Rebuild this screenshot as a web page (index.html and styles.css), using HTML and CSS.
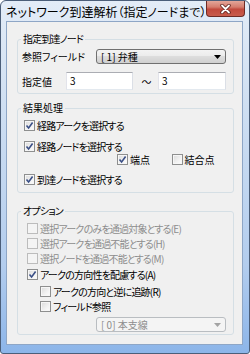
FILE: index.html
```html
<!DOCTYPE html>
<html lang="ja">
<head>
<meta charset="utf-8">
<title>ネットワーク到達解析</title>
<link rel="stylesheet" href="styles.css">
</head>
<body>
<div class="window">
  <div class="titlebar">
    <span class="title">ネットワーク到達解析（指定ノードまで）</span>
    <div class="close">
      <svg width="13" height="10" viewBox="0 0 13 10">
        <path d="M3 1.5 L10 8.5 M10 1.5 L3 8.5" stroke="#5a1f1a" stroke-width="3.4" stroke-linecap="round"/>
        <path d="M3 1.5 L10 8.5 M10 1.5 L3 8.5" stroke="#ffffff" stroke-width="1.8" stroke-linecap="round"/>
      </svg>
    </div>
  </div>
  <div class="client">
    <fieldset class="group g1">
      <legend>指定到達ノード</legend>
      <div class="row-field">
        <span class="lbl lbl-long">参照フィールド</span>
        <div class="combo">
          <span>[ 1] 弁種</span>
          <svg class="arrow" width="7" height="4" viewBox="0 0 7 4"><path d="M0 0 H7 L3.5 4 Z" fill="#000"/></svg>
        </div>
      </div>
      <div class="row-value">
        <span class="lbl lbl-short kanji">指定値</span>
        <div class="textbox">3</div>
        <span class="tilde">～</span>
        <div class="textbox wide">3</div>
      </div>
    </fieldset>

    <fieldset class="group g2">
      <legend class="kanji">結果処理</legend>
      <div class="body body2">
        <div class="cbrow">
          <span class="cb checked"><svg width="9" height="9" viewBox="0 0 9 9"><path d="M1.5 4.5 L3.6 7 L7.6 1.6" fill="none" stroke="#3a4f86" stroke-width="1.6"/></svg></span>
          <span>経路アークを選択する</span>
        </div>
        <div class="cbrow r2">
          <span class="cb checked"><svg width="9" height="9" viewBox="0 0 9 9"><path d="M1.5 4.5 L3.6 7 L7.6 1.6" fill="none" stroke="#3a4f86" stroke-width="1.6"/></svg></span>
          <span>経路ノードを選択する</span>
        </div>
        <div class="cbrow sub">
          <div class="subitem">
            <span class="cb checked"><svg width="9" height="9" viewBox="0 0 9 9"><path d="M1.5 4.5 L3.6 7 L7.6 1.6" fill="none" stroke="#3a4f86" stroke-width="1.6"/></svg></span>
            <span class="kanji">端点</span>
          </div>
          <div class="subitem">
            <span class="cb"></span>
            <span class="kanji">結合点</span>
          </div>
        </div>
        <div class="cbrow r4">
          <span class="cb checked"><svg width="9" height="9" viewBox="0 0 9 9"><path d="M1.5 4.5 L3.6 7 L7.6 1.6" fill="none" stroke="#3a4f86" stroke-width="1.6"/></svg></span>
          <span>到達ノードを選択する</span>
        </div>
      </div>
    </fieldset>

    <fieldset class="group g3">
      <legend>オプション</legend>
      <div class="body body3">
        <div class="cbrow disabled">
          <span class="cb"></span>
          <span>選択アークのみを通過対象とする(E)</span>
        </div>
        <div class="cbrow disabled o2">
          <span class="cb"></span>
          <span>選択アークを通過不能とする(H)</span>
        </div>
        <div class="cbrow disabled o3">
          <span class="cb"></span>
          <span>選択ノードを通過不能とする(M)</span>
        </div>
        <div class="cbrow o4">
          <span class="cb checked"><svg width="9" height="9" viewBox="0 0 9 9"><path d="M1.5 4.5 L3.6 7 L7.6 1.6" fill="none" stroke="#3a4f86" stroke-width="1.6"/></svg></span>
          <span>アークの方向性を配慮する(A)</span>
        </div>
        <div class="cbrow indent o5">
          <span class="cb"></span>
          <span>アークの方向と逆に追跡(R)</span>
        </div>
        <div class="cbrow indent o6">
          <span class="cb"></span>
          <span>フィールド参照</span>
        </div>
        <div class="combo disabled-combo">
          <span>[ 0] 本支線</span>
          <svg class="arrow" width="7" height="4" viewBox="0 0 7 4"><path d="M0 0 H7 L3.5 4 Z" fill="#a3a3a3"/></svg>
        </div>
      </div>
    </fieldset>
  </div>
</div>
</body>
</html>
```

FILE: styles.css
```css
html, body {
  margin: 0;
  padding: 0;
}

body {
  width: 250px;
  height: 354px;
  overflow: hidden;
  background: #ffffff;
  font-family: "Noto Sans CJK JP", "Noto Sans", sans-serif;
  font-size: 10px;
  font-feature-settings: "palt";
  letter-spacing: -0.8px;
  color: #000;
}

.kanji { letter-spacing: 0; }

.window {
  width: 250px;
  height: 354px;
  box-sizing: border-box;
  border: 1px solid #4b5e79;
  border-radius: 6px 6px 3px 3px;
  background: linear-gradient(to bottom, #e3ecf7 0%, #cfdff2 30%, #b3cdee 75%, #8cb5e9 100%);
  display: flex;
  flex-direction: column;
}

.titlebar {
  height: 20px;
  display: flex;
  align-items: center;
  padding: 0 4px 0 5px;
}

.title {
  font-size: 12px;
  line-height: 14px;
  letter-spacing: 0;
  color: #000;
  white-space: nowrap;
  margin-top: 1px;
}

.close {
  margin-left: auto;
  align-self: flex-start;
  width: 39px;
  height: 16px;
  box-sizing: border-box;
  border: 1px solid #6e2b25;
  border-top: none;
  border-radius: 0 0 4px 4px;
  background: linear-gradient(to bottom, #e3a699 0%, #d57d6e 40%, #c24a3d 55%, #c85c4c 100%);
  display: flex;
  align-items: center;
  justify-content: center;
}

.client {
  flex: 1;
  margin: 0 6px 8px 5px;
  background: #f0f0f0;
  border: 1px solid #8ea6c6;
  display: flex;
  flex-direction: column;
}

.group {
  margin: 0 8px 0 10px;
  width: 217px;
  box-sizing: border-box;
  border: 1px solid #d5dfe5;
  border-radius: 3px;
  padding: 4px 7px 3px 4px;
  min-width: 0;
}

.group legend {
  padding: 0 2px;
  margin-left: -1px;
  line-height: 12px;
  font-size: 10px;
}

.g1 { margin-top: 11px; }
.g2 { margin-top: 8px; padding-top: 5px; padding-bottom: 6px; }
.g3 { margin-top: 12px; padding-top: 5px; padding-bottom: 2px; }

.row-field {
  display: flex;
  align-items: center;
  height: 15px;
}

.lbl-long { width: 74px; flex: none; letter-spacing: 0; }
.lbl-short { width: 44px; flex: none; }

.row-value {
  display: flex;
  align-items: center;
  height: 18px;
  margin-top: 8px;
}

.combo {
  width: 130px;
  height: 15px;
  box-sizing: border-box;
  border: 1px solid #707070;
  border-radius: 3px;
  background: linear-gradient(to bottom, #f3f3f3 0%, #ebebeb 50%, #dddddd 50%, #d0d0d0 100%);
  display: flex;
  align-items: center;
  justify-content: space-between;
  padding: 0 4px 0 4px;
  line-height: 13px;
  letter-spacing: 0;
  flex: none;
}

.arrow { flex: none; }

.textbox {
  width: 67px;
  height: 18px;
  box-sizing: border-box;
  border: 1px solid #abadb3;
  border-bottom-color: #e3e9ef;
  border-left-color: #e2e3ea;
  border-right-color: #dbdfe6;
  background: #ffffff;
  padding-left: 3px;
  line-height: 16px;
  flex: none;
}

.textbox.wide { width: 68px; }

.tilde {
  width: 24px;
  text-align: center;
  flex: none;
  margin-left: 1px;
}

.body2 { padding-left: 2px; }
.body3 { padding-left: 5px; }

.cbrow {
  display: flex;
  align-items: center;
  height: 13px;
  line-height: 13px;
  white-space: nowrap;
}

.r2 { margin-top: 8px; }
.r4 { margin-top: 7px; }

.sub { padding-left: 93px; }

.subitem {
  display: flex;
  align-items: center;
  width: 58px;
}

.cb {
  width: 11px;
  height: 11px;
  box-sizing: border-box;
  border: 1px solid #8e8f8f;
  background: linear-gradient(135deg, #dadada 0%, #f2f2f2 60%, #fdfdfd 100%);
  box-shadow: inset 0 0 0 1px #f6f6f6;
  margin-right: 2px;
  flex: none;
  display: flex;
  align-items: center;
  justify-content: center;
}

.cb svg { display: block; }

.disabled { color: #8d8d8d; }
.disabled .cb {
  border-color: #bcbcbc;
  background: #f4f4f4;
  box-shadow: none;
}

.o2 { margin-top: 2px; }
.o3 { margin-top: 2px; }
.o4 { margin-top: 3px; }
.o5 { margin-top: 4px; }
.o6 { margin-top: 2px; }
.indent { padding-left: 13px; }

.disabled-combo {
  margin-top: 4px;
  margin-left: 69px;
  border-color: #b9bdc1;
  background: #f4f4f4;
  color: #8d8d8d;
}
```
